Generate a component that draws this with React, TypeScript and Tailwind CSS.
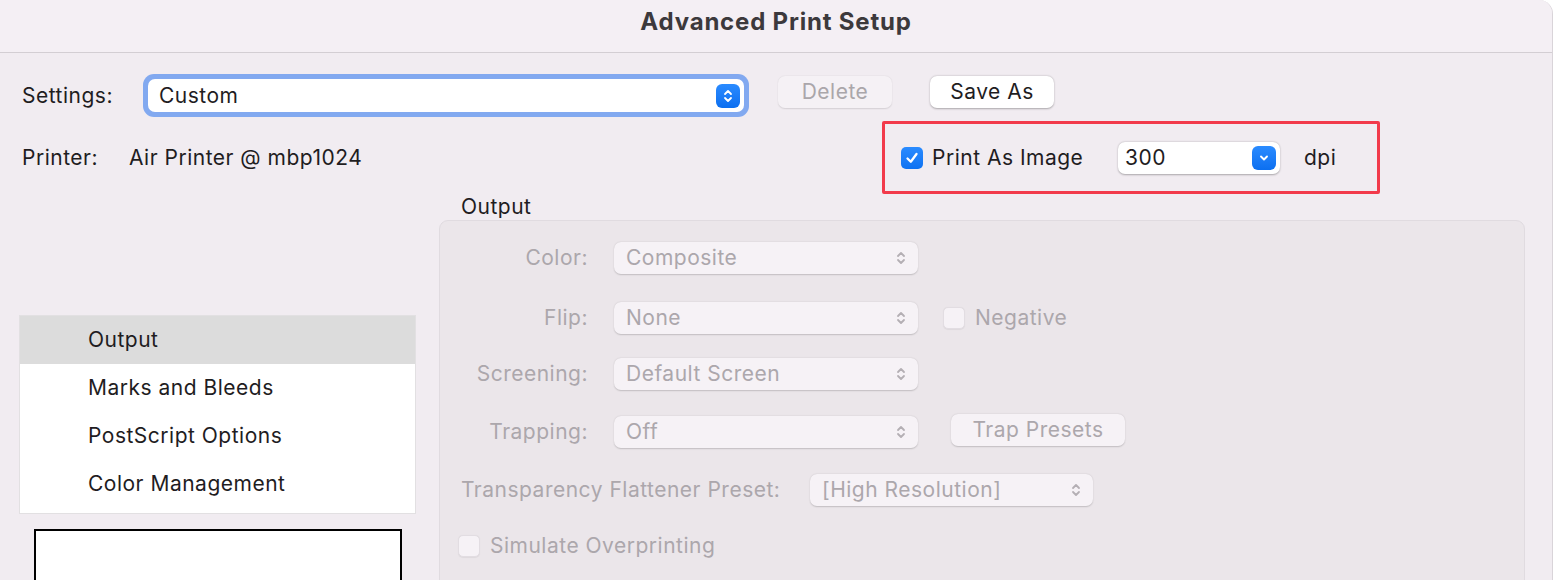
import React from "react";

const font = { fontFamily: "Inter, 'Noto Sans', sans-serif" };

function Stepper({ color }: { color: string }) {
  return (
    <svg width="10" height="16" viewBox="0 0 10 16" fill="none">
      <path d="M2 6 L5 3 L8 6" stroke={color} strokeWidth="1.8" strokeLinecap="round" strokeLinejoin="round" />
      <path d="M2 10 L5 13 L8 10" stroke={color} strokeWidth="1.8" strokeLinecap="round" strokeLinejoin="round" />
    </svg>
  );
}

function DisabledSelect({ value, w }: { value: string; w: string }) {
  return (
    <div
      className={`${w} h-[32px] flex items-center justify-between pl-[12px] pr-[12px] rounded-[7px] bg-[#f6f2f6] shadow-[0_0.5px_1.5px_rgba(0,0,0,0.18)] text-[#aca7ac]`}
    >
      <span>{value}</span>
      <Stepper color="#b4afb4" />
    </div>
  );
}

function Checkbox({ checked }: { checked?: boolean }) {
  if (checked) {
    return (
      <div className="w-[22px] h-[22px] rounded-[5px] bg-gradient-to-b from-[#2a8bff] to-[#0d72f2] flex items-center justify-center">
        <svg width="14" height="14" viewBox="0 0 14 14" fill="none">
          <path d="M2.5 7.5 L5.8 10.8 L11.5 3" stroke="white" strokeWidth="2.3" strokeLinecap="round" strokeLinejoin="round" />
        </svg>
      </div>
    );
  }
  return <div className="w-[22px] h-[22px] rounded-[5px] bg-[#f6f2f6] border border-[#e2dde2] shadow-[0_0.5px_1px_rgba(0,0,0,0.06)]" />;
}

export default function App() {
  return (
    <div style={font} className="w-[1556px] h-[580px] overflow-hidden bg-white">
      <div className="w-[1553px] h-[580px] rounded-tr-[14px] bg-[#f1ecf1] border-r border-[#d9d4d9] text-[21px] tracking-[0.5px] text-[#1f1d1f] overflow-hidden">
        {/* title bar */}
        <div className="h-[53px] bg-[#f4eff4] border-b border-[#d3ced3] flex justify-center pt-[6px]">
          <span className="text-[24px] leading-[32px] font-bold text-[#3c393c] tracking-[0.8px]">Advanced Print Setup</span>
        </div>

        {/* settings row */}
        <div className="mt-[21px] h-[43px] flex items-center pl-[22px]">
          <span className="w-[121px]">Settings:</span>
          <div className="w-[606px] h-[43px] rounded-[11px] bg-[#82a9f0] p-[5px]">
            <div className="h-full rounded-[7px] bg-white flex items-center justify-between pl-[11px] pr-[4px]">
              <span>Custom</span>
              <div className="w-[24px] h-[24px] rounded-[6px] bg-gradient-to-b from-[#2a8bff] to-[#0b6ff0] flex items-center justify-center">
                <Stepper color="white" />
              </div>
            </div>
          </div>
          <button className="ml-[29px] w-[114px] h-[32px] rounded-[7px] bg-[#f5f1f5] shadow-[0_0.5px_1.5px_rgba(0,0,0,0.12)] text-[#aaa6aa] -translate-y-[4px]">
            Delete
          </button>
          <button className="ml-[38px] w-[124px] h-[32px] rounded-[7px] bg-white shadow-[0_0.5px_2px_rgba(0,0,0,0.3)] -translate-y-[4px]">
            Save As
          </button>
        </div>

        {/* printer row */}
        <div className="mt-[4px] h-[73px] flex items-center pl-[22px]">
          <span className="w-[107px]">Printer:</span>
          <span className="w-[753px]">Air Printer @ mbp1024</span>
          <div className="w-[498px] h-[73px] border-[3px] border-[#f23a4b] rounded-[2px] flex items-center pl-[16px]">
            <Checkbox checked />
            <span className="ml-[9px] w-[186px]">Print As Image</span>
            <div className="w-[162px] h-[32px] rounded-[7px] bg-white shadow-[0_0.5px_2px_rgba(0,0,0,0.3)] flex items-center justify-between pl-[7px] pr-[4px]">
              <span>300</span>
              <div className="w-[24px] h-[24px] rounded-[6px] bg-gradient-to-b from-[#2a8bff] to-[#0b6ff0] flex items-center justify-center">
                <svg width="12" height="12" viewBox="0 0 12 12" fill="none">
                  <path d="M3 4.5 L6 7.5 L9 4.5" stroke="white" strokeWidth="1.9" strokeLinecap="round" strokeLinejoin="round" />
                </svg>
              </div>
            </div>
            <span className="ml-[24px]">dpi</span>
          </div>
        </div>

        {/* main area */}
        <div className="flex pl-[19px]">
          {/* left column */}
          <div className="w-[397px] pt-[121px] flex flex-col">
            <div className="bg-white border border-[#e2e0e2] pb-[5px]">
              {["Output", "Marks and Bleeds", "PostScript Options", "Color Management"].map((item, i) => (
                <div key={item} className={`h-[48px] flex items-center pl-[68px] ${i === 0 ? "bg-[#dcdcdc]" : ""}`}>
                  {item}
                </div>
              ))}
            </div>
            <div className="mt-[15px] ml-[15px] w-[368px] h-[80px] bg-white border-2 border-black" />
          </div>

          {/* right column */}
          <div className="ml-[23px] flex flex-col">
            <div className="h-[26px] pl-[22px] leading-[26px]">Output</div>
            <div className="w-[1086px] h-[400px] rounded-[9px] bg-[#ebe6ea] border border-[#e0dbe0] text-[#aca7ac]">
              <div className="mt-[21px] flex items-center">
                <span className="w-[148px] text-right">Color:</span>
                <div className="ml-[26px]">
                  <DisabledSelect value="Composite" w="w-[304px]" />
                </div>
              </div>
              <div className="mt-[28px] flex items-center">
                <span className="w-[148px] text-right">Flip:</span>
                <div className="ml-[26px]">
                  <DisabledSelect value="None" w="w-[304px]" />
                </div>
                <div className="ml-[25px]">
                  <Checkbox />
                </div>
                <span className="ml-[10px]">Negative</span>
              </div>
              <div className="mt-[24px] flex items-center">
                <span className="w-[148px] text-right">Screening:</span>
                <div className="ml-[26px]">
                  <DisabledSelect value="Default Screen" w="w-[304px]" />
                </div>
              </div>
              <div className="mt-[26px] flex items-center">
                <span className="w-[148px] text-right">Trapping:</span>
                <div className="ml-[26px]">
                  <DisabledSelect value="Off" w="w-[304px]" />
                </div>
                <button className="ml-[33px] w-[174px] h-[32px] -translate-y-[2px] rounded-[7px] bg-[#f6f2f6] shadow-[0_0.5px_1.5px_rgba(0,0,0,0.18)] text-[#aca7ac]">
                  Trap Presets
                </button>
              </div>
              <div className="mt-[26px] flex items-center pl-[21px]">
                <span className="w-[349px] whitespace-nowrap">Transparency Flattener Preset:</span>
                <DisabledSelect value="[High Resolution]" w="w-[283px]" />
              </div>
              <div className="mt-[24px] flex items-center pl-[18px]">
                <Checkbox />
                <span className="ml-[10px]">Simulate Overprinting</span>
              </div>
            </div>
          </div>
        </div>
      </div>
    </div>
  );
}
